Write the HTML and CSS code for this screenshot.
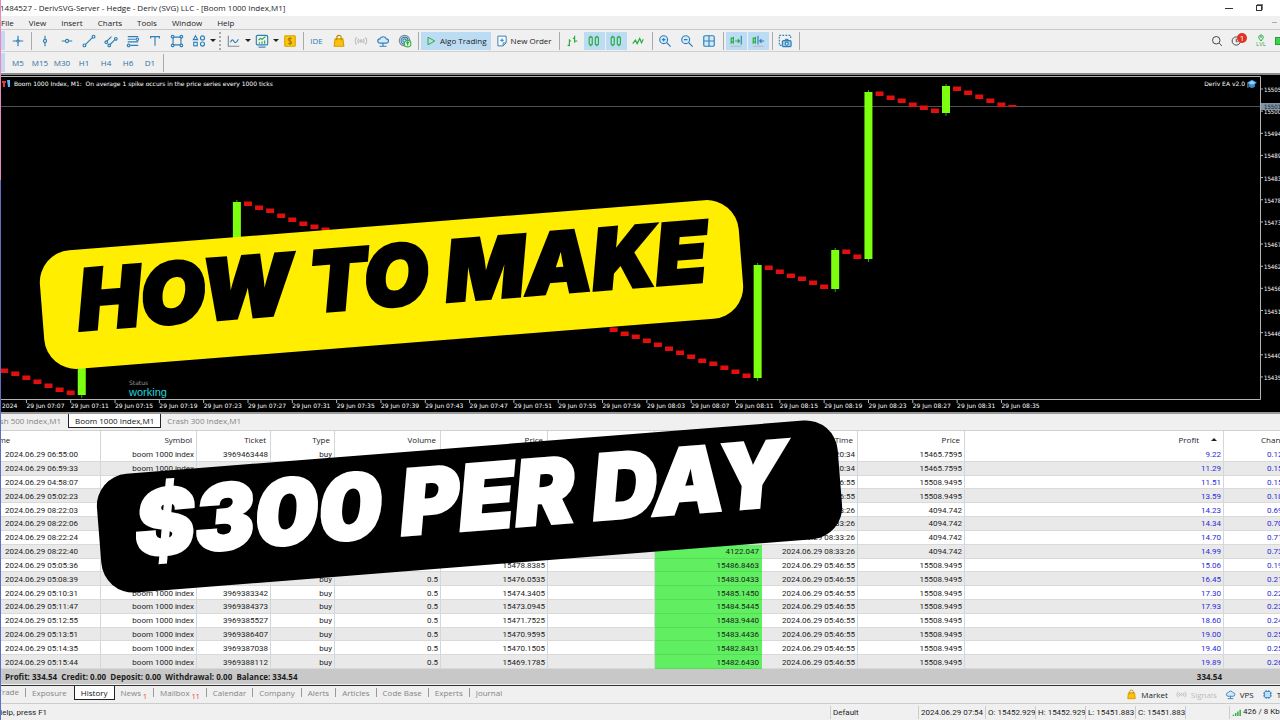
FILE: index.html
```html
<!DOCTYPE html>
<html lang="en">
<head>
<meta charset="utf-8">
<title>Boom 1000 Index,M1</title>
<link rel="stylesheet" href="styles.css">
</head>
<body>
<svg class="sprite" aria-hidden="true">
  <symbol id="i-cross" viewBox="0 0 16 16"><path d="M8 2v12M2 8h12"/><path class="pale" d="M8 6.500l1.500 1.500L8 9.500 6.500 8z"/></symbol>
  <symbol id="i-vline" viewBox="0 0 16 16"><path d="M8 2v4M8 10v4"/><circle cx="8" cy="8" r="1.800"/></symbol>
  <symbol id="i-hline" viewBox="0 0 16 16"><path d="M2 8h4M10 8h4"/><circle cx="8" cy="8" r="1.800"/></symbol>
  <symbol id="i-trend" viewBox="0 0 16 16"><path d="M3.800 12.200l8.400-8.400"/><circle cx="2.800" cy="13" r="1.600"/><circle cx="13.200" cy="3" r="1.600"/></symbol>
  <symbol id="i-channel" viewBox="0 0 16 16"><path d="M3 8.500L8.500 3M7 12l5.500-5.500"/><circle cx="2.600" cy="9.400" r="1.500"/><circle cx="6" cy="13" r="1.500"/><circle cx="13.500" cy="5.500" r="1.500"/></symbol>
  <symbol id="i-fibo" viewBox="0 0 16 16"><path d="M2 3h12M2 6h9M2 9h12M5 13h9"/><circle cx="13" cy="6" r="1.400"/><circle cx="3" cy="13" r="1.500"/></symbol>
  <symbol id="i-text" viewBox="0 0 16 16"><path d="M3 5V3h10v2M8 3v10.500"/></symbol>
  <symbol id="i-rect" viewBox="0 0 16 16"><path d="M4.500 3.500h7M4.500 12.500h7M3.500 4.500v7M12.500 4.500v7"/><circle cx="3" cy="3" r="1.500"/><circle cx="13" cy="3" r="1.500"/><circle cx="3" cy="13" r="1.500"/><circle cx="13" cy="13" r="1.500"/></symbol>
  <symbol id="i-shapes" viewBox="0 0 16 16"><path d="M4 2l2.500 4.500h-5z"/><circle cx="12" cy="4.500" r="2.300"/><rect x="2" y="9.500" width="4" height="4"/><circle cx="12" cy="11.500" r="2.300"/></symbol>
  <symbol id="i-line" viewBox="0 0 16 16"><path class="gray" d="M1.500 2v12H14"/><path d="M4 9.500c1.500-4 3-3 4-1s2.500 2 5-2.500"/></symbol>
  <symbol id="i-indic" viewBox="0 0 16 16"><rect x="1.500" y="1.500" width="13" height="11" rx="1.500"/><path d="M4 15h8"/><path class="green" d="M4 7l2-2 2 1 4-3M5 11V9.500M8 11V8.500M11 11V7.500"/></symbol>
  <symbol id="i-dollar" viewBox="0 0 16 16"><rect x="2" y="2" width="12" height="12" rx="1" fill="#f9c80e" stroke="#d9a400"/><path stroke="#b07a00" d="M10 5.500C9 4.500 6 4.700 6 6.300S10 8 10 9.800s-3 1.800-4.200.7M8 3.500v9"/></symbol>
  <symbol id="i-bag" viewBox="0 0 16 16"><path fill="#fbc20c" stroke="#d79c00" d="M3.500 5.500h9l1 8.500h-11z"/><path stroke="#c08a00" d="M5.500 7V4a2.500 2.500 0 0 1 5 0v3"/></symbol>
  <symbol id="i-signal" viewBox="0 0 16 16"><g class="light"><circle cx="8" cy="8" r="1.300"/><path d="M5.500 5.500a3.500 3.500 0 0 0 0 5M10.500 5.500a3.500 3.500 0 0 1 0 5M3 4a6 6 0 0 0 0 8M13 4a6 6 0 0 1 0 8"/></g></symbol>
  <symbol id="i-cloud" viewBox="0 0 16 16"><path fill="#d4eafa" d="M4.500 10.500a2.500 2.500 0 0 1 0-5 4 4 0 0 1 7.300 0 2.500 2.500 0 0 1 0 5z"/><path d="M8 10.500V14M4 14h8"/></symbol>
  <symbol id="i-radar" viewBox="0 0 16 16"><circle class="gray" cx="7.500" cy="7.500" r="6"/><circle cx="7.500" cy="7.500" r="4"/><circle cx="7.500" cy="7.500" r="2"/><circle cx="11" cy="11" r="3.700" fill="#e6f7e4" stroke="#34b34a"/><path class="green" d="M11 13V9M9.500 10.500L11 9l1.500 1.500"/></symbol>
  <symbol id="i-play" viewBox="0 0 16 16"><path class="green" d="M4 3l9 5-9 5z"/></symbol>
  <symbol id="i-order" viewBox="0 0 16 16"><path fill="#fff" d="M2.500 1.500h11v9l-4 4h-7z"/><path d="M8 4.500v5M5.500 7h5M13 10.500H9.500V14"/></symbol>
  <symbol id="i-bars" viewBox="0 0 16 16"><path class="green" d="M5 6v8M3 13h2M5 8h2M11 2v8M9 5h2M11 8h3"/></symbol>
  <symbol id="i-candles" viewBox="0 0 16 16"><g class="green"><rect x="2.500" y="3.500" width="3.500" height="9" rx="1"/><rect x="9.500" y="3.500" width="3.500" height="9" rx="1"/><path d="M4.250 2v1.500M4.250 12.500V14M11.250 2v1.500M11.250 12.500V14"/></g></symbol>
  <symbol id="i-zig" viewBox="0 0 16 16"><path class="green" d="M2 11l3-4 2 4 3-6 2 5 2-4"/></symbol>
  <symbol id="i-zin" viewBox="0 0 16 16"><circle cx="6.500" cy="6.500" r="4.500" fill="#d4eafa"/><path d="M10 10l4.500 4.500M4.500 6.500h4M6.500 4.500v4"/></symbol>
  <symbol id="i-zout" viewBox="0 0 16 16"><circle cx="6.500" cy="6.500" r="4.500" fill="#d4eafa"/><path d="M10 10l4.500 4.500M4.500 6.500h4"/></symbol>
  <symbol id="i-grid" viewBox="0 0 16 16"><rect x="2" y="2" width="12" height="12" rx="1.500" fill="#d4eafa"/><path d="M8 2v12M2 8h12"/></symbol>
  <symbol id="i-scroll" viewBox="0 0 16 16"><path class="green" d="M2.500 4v7M5 3v8M2 5h3v4H2M7 8h5M10 6l2 2-2 2"/><path d="M14 2v10"/><path class="light" d="M2 14h12"/></symbol>
  <symbol id="i-shift" viewBox="0 0 16 16"><path class="green" d="M2.500 4v7M5 3v8M2 5h3v4H2"/><path d="M8 2v10M15 8h-5M12 6l-2 2 2 2"/><path class="light" d="M2 14h12"/></symbol>
  <symbol id="i-camera" viewBox="0 0 16 16"><path stroke-dasharray="2 1.500" d="M4 13H1.500V1.500h13V5"/><rect x="5" y="7.500" width="10" height="7" rx="1.500" fill="#9fcdee"/><path d="M8 7.500l1-1.500h2l1 1.500"/><circle cx="10" cy="11" r="1.700" fill="#fff"/></symbol>
  <symbol id="i-search" viewBox="0 0 16 16"><g class="dark"><circle cx="7" cy="7" r="5"/><path d="M11 11l3.500 3.500"/></g></symbol>
  <symbol id="i-bell" viewBox="0 0 16 16"><g class="dark"><circle cx="7" cy="8" r="5.500"/><path d="M7 5v4h2"/></g></symbol>
  <symbol id="i-pin" viewBox="0 0 16 16"><path class="green" stroke-width="2" d="M8 14L4 8.500a4.500 4.500 0 1 1 8 0z"/><circle class="green" cx="8" cy="6" r="1.500"/></symbol>
  <symbol id="i-chip" viewBox="0 0 16 16"><rect x="3.500" y="3.500" width="9" height="9" rx="2" fill="#bfe0f7"/><path d="M6 1.500v2M10 1.500v2M6 12.500v2M10 12.500v2M1.500 6h2M1.500 10h2M12.500 6h2M12.500 10h2"/></symbol>
  <symbol id="i-net" viewBox="0 0 16 16"><path stroke="#25ab3c" stroke-width="2.500" d="M2.500 14v-2M6.500 14v-5M10.500 14V6M14.500 14V3"/></symbol>
  <symbol id="i-cap" viewBox="0 0 16 16"><path fill="#8fd0ff" stroke="#3d9be0" d="M1 6l7-4 7 4-7 4z"/><path fill="#2f8ad6" stroke="#3d9be0" d="M4 8v4c2 2 6 2 8 0V8l-4 2z"/><path stroke="#8fd0ff" d="M1.500 6v8"/></symbol>
</svg>

<div class="window">
  <header class="titlebar">
    <span>1484527 - DerivSVG-Server - Hedge - Deriv (SVG) LLC - [Boom 1000 Index,M1]</span>
    <div class="win-controls">
      <button class="win-min" aria-label="Minimize"></button>
      <button class="win-restore" aria-label="Restore"></button>
    </div>
  </header>
  <nav class="menubar">
    <button>File</button><button>View</button><button>Insert</button><button>Charts</button><button>Tools</button><button>Window</button><button>Help</button>
    <i class="mdi-min"></i>
  </nav>

  <div class="toolbar">
    <span class="stub"></span>
    <button aria-label="Crosshair"><svg><use href="#i-cross"/></svg></button>
    <i class="sep"></i>
    <button aria-label="Vertical line"><svg><use href="#i-vline"/></svg></button>
    <button aria-label="Horizontal line"><svg><use href="#i-hline"/></svg></button>
    <button aria-label="Trend line"><svg><use href="#i-trend"/></svg></button>
    <button aria-label="Channel"><svg><use href="#i-channel"/></svg></button>
    <button aria-label="Fibonacci"><svg><use href="#i-fibo"/></svg></button>
    <button aria-label="Text"><svg><use href="#i-text"/></svg></button>
    <button aria-label="Rectangle"><svg><use href="#i-rect"/></svg></button>
    <button aria-label="Shapes"><svg><use href="#i-shapes"/></svg></button>
    <i class="caret"></i><i class="grip"></i>
    <button aria-label="Chart type"><svg><use href="#i-line"/></svg></button>
    <i class="caret"></i>
    <button aria-label="Indicators"><svg><use href="#i-indic"/></svg></button>
    <i class="caret"></i>
    <button aria-label="Depth of market"><svg><use href="#i-dollar"/></svg></button>
    <i class="sep"></i>
    <button class="ide">IDE</button>
    <button aria-label="Market"><svg><use href="#i-bag"/></svg></button>
    <button aria-label="Signals"><svg><use href="#i-signal"/></svg></button>
    <button aria-label="VPS"><svg><use href="#i-cloud"/></svg></button>
    <button aria-label="Radar"><svg><use href="#i-radar"/></svg></button>
    <i class="sep"></i>
    <button class="wide on"><svg><use href="#i-play"/></svg>Algo Trading</button>
    <button class="wide"><svg><use href="#i-order"/></svg>New Order</button>
    <i class="sep"></i>
    <button aria-label="Bars"><svg><use href="#i-bars"/></svg></button>
    <button class="on" aria-label="Candles"><svg><use href="#i-candles"/></svg></button>
    <button class="on" aria-label="Candlesticks"><svg><use href="#i-candles"/></svg></button>
    <button aria-label="Line"><svg><use href="#i-zig"/></svg></button>
    <i class="sep"></i>
    <button aria-label="Zoom in"><svg><use href="#i-zin"/></svg></button>
    <button aria-label="Zoom out"><svg><use href="#i-zout"/></svg></button>
    <button aria-label="Tile windows"><svg><use href="#i-grid"/></svg></button>
    <i class="sep"></i>
    <button class="on" aria-label="Auto scroll"><svg><use href="#i-scroll"/></svg></button>
    <button class="on" aria-label="Chart shift"><svg><use href="#i-shift"/></svg></button>
    <i class="sep"></i>
    <button aria-label="Screenshot"><svg><use href="#i-camera"/></svg></button>
    <i class="sep"></i>
    <div class="tools-right">
      <button aria-label="Search"><svg><use href="#i-search"/></svg></button>
      <button class="bell" aria-label="Notifications"><svg><use href="#i-bell"/></svg><b>1</b></button>
      <button class="level"><svg><use href="#i-pin"/></svg><span>LVL</span></button>
      <i class="battery"></i>
    </div>
  </div>

  <div class="frames">
    <span class="stub"></span>
    <button>M5</button><button>M15</button><button>M30</button><button>H1</button><button>H4</button><button>H6</button><button>D1</button>
    <i class="sep"></i>
  </div>

  <main class="chart">
    <svg class="plot" id="plot" viewBox="0 75 1280 337" preserveAspectRatio="xMinYMin slice" role="img" aria-label="Boom 1000 Index one minute chart"></svg>
  </main>

  <div class="chart-tabs">
    <button class="cut">Crash 500 Index,M1</button>
    <button class="active">Boom 1000 Index,M1</button>
    <button>Crash 300 Index,M1</button>
  </div>

  <table class="history">
    <colgroup><col class="c101"><col class="c96"><col class="c74"><col class="c64"><col class="c106"><col class="c107"><col class="c107"><col class="c107"><col class="c96"><col class="c107"><col><col class="c56"></colgroup>
    <thead>
      <tr><th class="first"><span>Time</span></th><th>Symbol</th><th>Ticket</th><th>Type</th><th>Volume</th><th>Price</th><th>S / L</th><th>T / P</th><th>Time</th><th>Price</th><th class="profit">Profit<i></i></th><th class="change">Change</th></tr>
    </thead>
    <tbody id="rows"></tbody>
  </table>
  <div class="summary"><span>Profit: 334.54&nbsp; Credit: 0.00&nbsp; Deposit: 0.00&nbsp; Withdrawal: 0.00&nbsp; Balance: 334.54</span><span class="sum">334.54</span></div>

  <nav class="panel-tabs">
    <button class="first">Trade</button><button>Exposure</button><button class="active">History</button><button>News<sub>1</sub></button><button>Mailbox<sub>11</sub></button><button>Calendar</button><button>Company</button><button>Alerts</button><button>Articles</button><button>Code Base</button><button>Experts</button><button>Journal</button>
    <div class="services">
      <button><svg><use href="#i-bag"/></svg>Market</button>
      <button class="off"><svg><use href="#i-signal"/></svg>Signals</button>
      <button><svg><use href="#i-cloud"/></svg>VPS</button>
      <button><svg><use href="#i-chip"/></svg>Tester</button>
    </div>
  </nav>

  <footer class="status">
    <span class="help">For Help, press F1</span>
    <span class="s88">Default</span><span class="s68">2024.06.29 07:54</span><span class="s49">O: 15452.929</span><span class="s49">H: 15452.929</span><span class="s49">L: 15451.883</span><span class="s49">C: 15451.883</span><span class="s45"></span><span class="net"><svg><use href="#i-net"/></svg>426 / 8 Kb</span>
  </footer>

  <i class="edge"></i>
  <div class="banner banner-top"><span>HOW TO MAKE</span></div>
  <div class="banner banner-bottom"><span>$300 PER DAY</span></div>
</div>
<script src="script.js"></script>
</body>
</html>
```
FILE: styles.css
```css
:root {
  --ui: "Open Sans", "Noto Sans", sans-serif;
  --num: Roboto, "Open Sans", sans-serif;
  --blue: #2e7fb8;
  --face: #f0f0f0;
}
* { box-sizing: border-box; }
body { margin: 0; background: var(--face); font-family: var(--ui); font-size: 8px; line-height: 12px; color: #1c1c1c; }
button { border: 0; padding: 0; margin: 0; background: none; font: inherit; color: inherit; white-space: nowrap; }
svg { fill: none; stroke: var(--blue); stroke-width: 1.3; }
.sprite { position: absolute; width: 0; height: 0; }
.green { stroke: #25ab3c; }
.gray { stroke: #7d8a93; }
.light { stroke: #b9b9b9; }
.dark { stroke: #444; }
.pale { fill: #fff; }
.window { position: relative; min-height: 100vh; overflow: hidden; display: flex; flex-direction: column; }

.titlebar { display: flex; justify-content: space-between; height: 16px; line-height: 16px; background: #fff; white-space: nowrap; }
.win-controls { display: flex; align-items: center; gap: 23px; padding-right: 18px; }
.win-min { width: 8px; height: 1px; background: #333; }
.win-restore { width: 6px; height: 6px; border: 1px solid #333; box-shadow: 1px -1px 0 #777; }

.menubar { display: flex; align-items: center; gap: 15px; height: 14px; padding: 0 3px 0 1px; border-bottom: 1px solid #c9c9c9; }
.mdi-min { width: 5px; height: 1px; margin-left: auto; background: #aaa; }

.toolbar { display: flex; align-items: center; height: 22px; border-bottom: 1px solid #cfcfcf; }
.stub { flex: none; width: 5px; height: 19px; margin-right: 2px; background: #c8d5f3; }
.toolbar > button { flex: none; width: 22px; height: 18px; display: flex; align-items: center; justify-content: center; border-right: 1px solid transparent; background-clip: padding-box; }
.toolbar svg { width: 14px; height: 14px; }
.toolbar .on { background-color: #bcdcf4; }
.toolbar > .wide { width: auto; padding: 0 4px; gap: 3px; }
.toolbar .wide svg { width: 12px; height: 12px; }
.ide { color: var(--blue); }
.sep { flex: none; width: 1px; height: 18px; margin: 0 2px; background: #aaa; }
.caret { flex: none; width: 6px; border: solid transparent; border-width: 3px 3px 0; border-top-color: #222; }
.grip { flex: none; height: 18px; margin: 0 2px 0 3px; border-left: 2px dotted #aaa; }
.tools-right { display: flex; align-items: center; margin-left: auto; gap: 8px; }
.tools-right button { display: flex; align-items: center; }
.tools-right svg { width: 12px; height: 12px; }
.bell { position: relative; width: 16px; height: 16px; }
.bell b { position: absolute; right: 0; top: 0; width: 10px; height: 10px; border-radius: 5px; background: #df3324; color: #fff; line-height: 10px; text-align: center; font-weight: 400; }
.tools-right .level { flex-direction: column; color: #25ab3c; font-size: 6px; line-height: 5px; }
.tools-right .level svg { height: 8px; }
.battery { width: 5px; height: 8px; background: #3fd04f; border: solid #2b9a38; border-width: 1px 0 1px 1px; }

.frames { display: flex; align-items: center; height: 21px; color: #2d6f9f; }
.frames button { width: 22px; }
.frames .stub { margin-right: 2px; }

.chart { border-top: 2px solid #8a8a8a; border-bottom: 2px solid #999; background: #000; overflow: hidden; }
.plot { display: block; width: 100%; height: 337px; stroke: none; }
.plot text { font-family: "DejaVu Sans", sans-serif; font-size: 6px; fill: #fff; stroke: none; }
.plot .price { font-family: "DejaVu Sans Condensed", sans-serif; }
.plot .state { font-family: "Liberation Sans", sans-serif; font-size: 11px; fill: #1fd6dc; }
.plot .dim { fill: #999; }
.plot .tag { fill: #101820; }
.plot .frame { stroke: #b4b4b4; stroke-width: 1; }
.plot .bid { stroke: #4c5153; stroke-width: 1; }
.plot .up { fill: #7dff10; }
.plot .wick { stroke: #2cae10; stroke-width: 1; }
.plot .down { fill: #e01010; }

.chart-tabs { display: flex; height: 17px; color: #858585; border-bottom: 1px solid #d0d0d0; }
.chart-tabs button { height: 14px; line-height: 14px; padding: 0 6px; }
.chart-tabs .cut { width: 68px; padding-right: 7px; display: flex; justify-content: flex-end; overflow: hidden; }
.chart-tabs .active { background: #fff; color: #111; border: solid #222; border-width: 0 1px 1px; }

.history { width: 100%; height: 238px; table-layout: fixed; border-collapse: separate; border-spacing: 0; background: #fff; }
.c101 { width: 101px; } .c96 { width: 96px; } .c74 { width: 74px; } .c64 { width: 64px; } .c106 { width: 106px; } .c107 { width: 107px; } .c56 { width: 56px; }
.history th, .history td { padding: 0 3px; text-align: right; font-weight: 400; white-space: nowrap; overflow: hidden; border-right: 1px solid #d3d7da; line-height: 12px; }
.history th { height: 17px; padding-right: 4px; }
.history td { font-family: var(--num); border-bottom: 1px solid #d9d9d9; padding-top: 1px; padding-right: 2px; line-height: 11px; }
.history tr:nth-child(even) td { background: #e9e9e9; }
.history tbody tr td.tp { background: #60ef60; border-color: #60ef60; border-bottom-color: #58dc58; }
.history .first, .history td:first-child { text-align: left; padding-left: 5px; }
.history .first span { margin-left: -13px; }
.history td.gain, .history td.change { color: #2b2bd8; }
.history .profit i { display: inline-block; margin: 0 2px 2px 12px; border: solid transparent; border-width: 0 3px 3px; border-bottom-color: #222; }
.history th.change { text-align: left; padding-left: 37px; }
.history td.change { text-align: left; padding-left: 43px; }
.history .change { padding-right: 0; border-right: 0; text-overflow: clip; }

.summary { display: flex; justify-content: space-between; height: 15px; line-height: 15px; padding: 0 58px 0 5px; background: #c8c8c8; font-weight: 700; }

.panel-tabs { display: flex; height: 19px; margin-top: 1px; border-top: 1px solid #333; border-bottom: 1px solid #ccc; color: #858585; overflow: hidden; }
.panel-tabs > button { position: relative; height: 14px; line-height: 12px; padding: 0 7px 0 6px; border-bottom: 1px solid transparent; }
.panel-tabs > button:not(.active)::after { content: ""; position: absolute; right: 0; top: 2px; height: 9px; border-right: 1px solid #999; }
.panel-tabs > button:nth-child(2)::after, .panel-tabs > button:nth-child(12)::after { display: none; }
.panel-tabs > .first { width: 26px; display: flex; justify-content: flex-end; }
.panel-tabs > .active { padding: 0 6px; background: #fff; color: #111; border: solid #222; border-width: 0 1px 1px; }
.panel-tabs sub { margin-left: 2px; color: #e32; font-size: 7px; line-height: 0; vertical-align: -3px; }
.services { display: flex; align-items: center; gap: 8px; margin-left: auto; margin-right: -20px; color: #1c1c1c; }
.services button { display: flex; align-items: center; gap: 4px; }
.services svg { width: 11px; height: 11px; }
.services .off { color: #bbb; }

.status { display: flex; flex: 1; align-items: center; font-family: var(--num); line-height: 14px; white-space: nowrap; overflow: hidden; }
.status span { height: 13px; padding-left: 2px; border-left: 1px solid #ccc; overflow: hidden; }
.status .help { flex: 1; padding: 0; border: 0; text-indent: -17px; }
.s88 { width: 88px; } .s68 { width: 67px; } .s49 { width: 50px; } .s45 { width: 44px; }
.status .net { width: 51px; display: flex; align-items: center; gap: 2px; }
.net svg { flex: none; width: 9px; height: 9px; }

.edge { position: absolute; left: 0; top: 0; bottom: 0; width: 1px; background: linear-gradient(#e58ab8 0 25%, #5c6fc4 25%); }
.banner { position: absolute; height: 119px; border-radius: 32px; transform: rotate(-4.5deg); white-space: nowrap; font-family: Inter, sans-serif; font-weight: 900; font-style: italic; line-height: 102px; }
.banner-top { left: 41px; top: 225px; width: 701px; padding-left: 36px; background: #ffee00; color: #000; font-size: 84px; -webkit-text-stroke: 3px #000; }
.banner-bottom { left: 98px; top: 447px; width: 743px; padding-left: 36px; background: #000; color: #fff; font-size: 90px; -webkit-text-stroke: 3px #fff; }
```
FILE: script.js
```js
const plot = document.getElementById('plot');
const parts = [];
const STEP = 11.08;
const candleX = (k) => 4.2 + STEP * k;

// frame and current price line
parts.push('<path class="bid" d="M0 106.500H1260"/>');
parts.push('<path class="frame" d="M0 76.500H1260.500V399.500M0 399.500H1260.500"/>');

// falling runs: first candle index and the middle of each body
const falling = [
  [0, [370, 373, 377, 381, 385, 389, 392]],
  [22, [203, 207, 210, 215, 219, 223, 226, 229, 233, 237]],
  [55, [329, 333, 336, 340, 344, 348, 352, 356, 360, 363, 367, 371, 375]],
  [69, [267, 271, 275, 278, 282, 286]],
  [76, [251, 256]],
  [79, [93, 97, 100, 104, 107, 110]],
  [86, [88, 92, 96, 100, 104]]
];
falling.forEach(([start, mids]) => mids.forEach((y, i) => {
  parts.push(`<rect class="down" x="${candleX(start + i) - 4}" y="${y - 1.5}" width="8" height="4.500"/>`);
}));
parts.push(`<rect class="down" x="${candleX(91) - 4}" y="105" width="8" height="2"/>`);

// spikes: index, top, bottom
[[7, 330, 395], [21, 202, 300], [68, 265, 378], [75, 250, 289], [78, 92, 259], [85, 86, 113]].forEach(([k, top, bottom]) => {
  const x = candleX(k);
  parts.push(`<path class="wick" d="M${x} ${top - 2}V${bottom + 3}"/><rect class="up" x="${x - 4}" y="${top}" width="8" height="${bottom - top}"/>`);
});

// time axis
parts.push('<text x="2" y="408">2024</text>');
for (let i = 0; i <= 22; i++) {
  const minutes = 7 * 60 + 7 + i * 4;
  const label = `29 Jun 0${Math.floor(minutes / 60)}:${String(minutes % 60).padStart(2, '0')}`;
  const x = 26.4 + i * 44.32;
  parts.push(`<path class="frame" d="M${x} 400V403"/><text x="${x}" y="408">${label}</text>`);
}

// price axis
[15505, 15500, 15494, 15489, 15483, 15478, 15473, 15467, 15462, 15456, 15451, 15446, 15440, 15435].forEach((price, i) => {
  const y = 89 + i * 22.15;
  parts.push(`<path class="frame" d="M1261 ${y}H1263"/><text class="price" x="1264" y="${y + 3}">${price}</text>`);
});
parts.push('<rect x="1261" y="103" width="19" height="7" fill="#8094a8"/><text class="price tag" x="1264" y="109">15501</text>');

parts.push('<path fill="#e33" d="M2 81h4v2H2zM3 83h2v4H3z"/><path fill="#5bb8ff" d="M7 80h3v7H8z"/>');
parts.push('<text x="14" y="86">Boom 1000 Index, M1:&#160; On average 1 spike occurs in the price series every 1000 ticks</text>');
parts.push('<text x="1245" y="86" text-anchor="end">Deriv EA v2.0</text><use href="#i-cap" x="1247" y="79" width="10" height="10"/>');
parts.push('<text class="dim" x="129" y="385">Status</text><text class="state" x="129" y="396">working</text>');
plot.innerHTML = parts.join('');

// open time, symbol, ticket, open price, take profit, close time, close price, profit, change
const B = 'boom 1000 index';
const C = '2024.06.29 05:46:55';
const D = '2024.06.29 08:33:26';
const E = '2024.06.29 07:20:34';
const deals = [
  ['06:55:00', '3969463448', '15460.3985', '', E, '15465.7595', '9.22', '0.12'],
  ['06:59:33', '3969465201', '15459.1205', '', E, '15465.7595', '11.29', '0.15'],
  ['04:58:07', '3969376110', '15485.9295', '', C, '15508.9495', '11.51', '0.15'],
  ['05:02:23', '3969378420', '15481.7695', '', C, '15508.9495', '13.59', '0.18'],
  ['08:22:03', '3969510233', '4123.202', '', D, '4094.742', '14.23', '0.69'],
  ['08:22:06', '3969510260', '4123.422', '', D, '4094.742', '14.34', '0.70'],
  ['08:22:24', '3969510377', '4124.142', '', D, '4094.742', '14.70', '0.71'],
  ['08:22:40', '3969510472', '4124.722', '4122.047', D, '4094.742', '14.99', '0.73'],
  ['05:05:36', '3969380371', '15478.8385', '15486.8463', C, '15508.9495', '15.06', '0.19'],
  ['05:08:39', '3969382114', '15476.0535', '15483.0433', C, '15508.9495', '16.45', '0.21'],
  ['05:10:31', '3969383342', '15474.3405', '15485.1450', C, '15508.9495', '17.30', '0.22'],
  ['05:11:47', '3969384373', '15473.0945', '15484.5445', C, '15508.9495', '17.93', '0.23'],
  ['05:12:55', '3969385527', '15471.7525', '15483.9440', C, '15508.9495', '18.60', '0.24'],
  ['05:13:51', '3969386407', '15470.9595', '15483.4436', C, '15508.9495', '19.00', '0.25'],
  ['05:14:35', '3969387038', '15470.1505', '15482.8431', C, '15508.9495', '19.40', '0.25'],
  ['05:15:44', '3969388112', '15469.1785', '15482.6430', C, '15508.9495', '19.89', '0.26']
];
document.getElementById('rows').innerHTML = deals.map(([t, ticket, open, tp, closed, price, gain, change]) =>
  `<tr><td>2024.06.29 ${t}</td><td>${B}</td><td>${ticket}</td><td>buy</td><td>0.5</td><td>${open}</td><td></td>` +
  `<td class="${tp ? 'tp' : ''}">${tp}</td><td>${closed}</td><td>${price}</td><td class="gain">${gain}</td><td class="change">${change}</td></tr>`
).join('');
```
